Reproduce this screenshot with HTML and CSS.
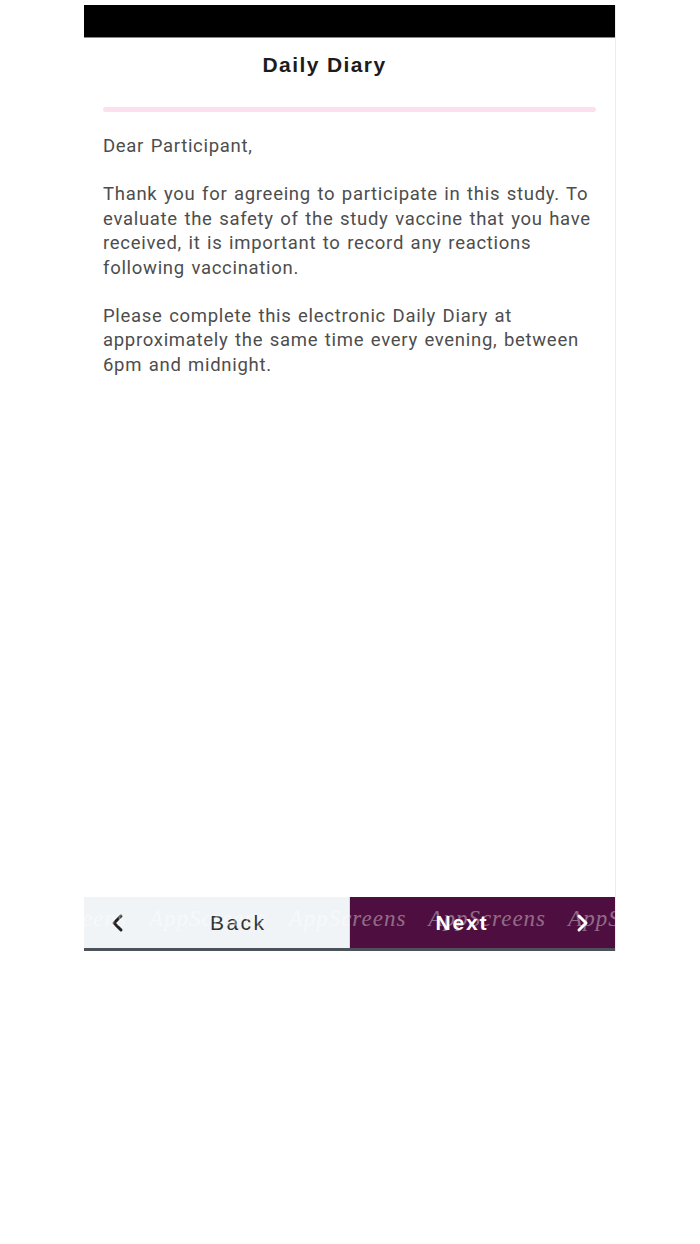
FILE: index.html
```html
<!DOCTYPE html>
<html lang="en">
<head>
<meta charset="utf-8">
<title>Daily Diary</title>
<link rel="stylesheet" href="styles.css">
</head>
<body>
<div class="phone">
  <div class="statusbar"></div>
  <header class="header">
    <h1 class="title">Daily Diary</h1>
  </header>
  <div class="progress"></div>
  <main class="content">
    <p>Dear Participant,</p>
    <p>Thank you for agreeing to participate in this study. To evaluate the safety of the study vaccine that you have received, it is important to record any reactions following vaccination.</p>
    <p>Please complete this electronic Daily Diary at approximately the same time every evening, between 6pm and midnight.</p>
  </main>
  <nav class="navbar">
    <button class="nav-btn back">
      <svg class="chev" width="14" height="20" viewBox="0 0 14 20"><path d="M11 3 L4 10 L11 17" fill="none" stroke="#222" stroke-width="3" stroke-linecap="round" stroke-linejoin="round"/></svg>
      <span class="label">Back</span>
    </button>
    <button class="nav-btn next">
      <span class="label">Next</span>
      <svg class="chev" width="14" height="20" viewBox="0 0 14 20"><path d="M3 3 L10 10 L3 17" fill="none" stroke="#fff" stroke-width="3" stroke-linecap="round" stroke-linejoin="round"/></svg>
    </button>
    <div class="watermark"><span>eens</span><span>AppScreens</span><span>AppScreens</span><span>AppScreens</span><span>AppS</span></div>
  </nav>
</div>
</body>
</html>
```
FILE: styles.css
```css
html, body {
  margin: 0;
  padding: 0;
  background: #fff;
}
body {
  padding-top: 5px;
  font-family: Roboto, "Liberation Sans", Arial, sans-serif;
}
.phone {
  width: 532px;
  height: 946px;
  margin-left: 84px;
  display: flex;
  flex-direction: column;
  border-right: 1px solid #ececec;
  box-sizing: border-box;
}
.statusbar {
  height: 32px;
  background: #000;
  border-bottom: 1px solid #888;
  flex: none;
}
.header {
  height: 53px;
  display: flex;
  align-items: center;
  justify-content: center;
  padding-right: 50px;
  flex: none;
}
.title {
  margin: 0;
  font-family: "Liberation Sans", Arial, sans-serif;
  font-weight: bold;
  font-size: 21px;
  color: #1c1c1c;
  letter-spacing: 1.4px;
}
.progress {
  height: 5px;
  margin: 16px 19px 0;
  background: #fde0ee;
  border-radius: 3px;
  flex: none;
}
.content {
  flex: 1;
  padding: 22px 19px 0;
  color: #4d4d4d;
  font-size: 18.5px;
  line-height: 24.4px;
  letter-spacing: 0.7px;
  word-spacing: 1.3px;
}
.content p {
  margin: 0 0 24px;
}
.navbar {
  position: relative;
  height: 54px;
  display: grid;
  grid-template-columns: 1fr 1fr;
  flex: none;
  border-bottom: 3px solid #4b5259;
  box-sizing: border-box;
  overflow: hidden;
}
.nav-btn {
  min-width: 0;
  border: 0;
  margin: 0;
  display: flex;
  align-items: center;
  font-family: "Liberation Sans", Arial, sans-serif;
  font-size: 21px;
  letter-spacing: 2.4px;
}
.back {
  background: #f1f4f7;
  color: #333;
  padding: 0 0 0 26px;
  border-right: 1px solid #d5d8dc;
}
.back .label {
  margin-left: 86px;
}
.next {
  background: #4e0f40;
  color: #fff;
  font-weight: bold;
  padding: 0 0 0 86px;
  letter-spacing: 1.8px;
}
.next .chev {
  margin-left: auto;
  margin-right: 25px;
}
.watermark {
  position: absolute;
  left: 0;
  top: 9px;
  display: flex;
  gap: 22px;
  white-space: nowrap;
  font-family: "Liberation Serif", serif;
  font-style: italic;
  font-size: 23px;
  letter-spacing: 1px;
  color: rgba(255, 255, 255, 0.4);
  pointer-events: none;
}
.watermark span:first-child {
  margin-left: -2px;
}
```
